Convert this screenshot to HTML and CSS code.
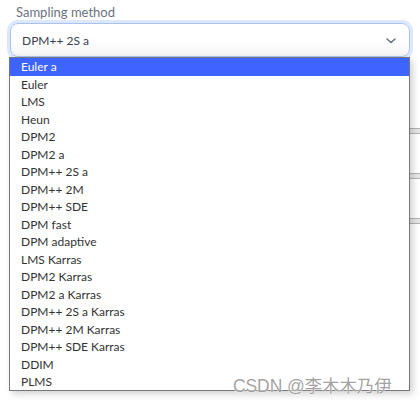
FILE: index.html
```html
<!DOCTYPE html>
<html lang="en">
<head>
<meta charset="utf-8">
<link rel="stylesheet" href="styles.css">
</head>
<body>
<div class="page">
  <div class="label">Sampling method</div>
  <div class="select">
    <span class="value">DPM++ 2S a</span>
    <svg class="chev" width="12" height="8" viewBox="0 0 12 8"><path d="M2 2 L6 5.5 L10 2" fill="none" stroke="#6b7280" stroke-width="1.6" stroke-linecap="round" stroke-linejoin="round"/></svg>
  </div>
  <div class="behind">
    <div class="field"><div class="num"></div></div>
    <div class="field"><div class="num"></div></div>
    <div class="field"><div class="num"></div></div>
  </div>
  <div class="menu">
    <ul class="options">
      <li class="active">Euler a</li>
      <li>Euler</li>
      <li>LMS</li>
      <li>Heun</li>
      <li>DPM2</li>
      <li>DPM2 a</li>
      <li>DPM++ 2S a</li>
      <li>DPM++ 2M</li>
      <li>DPM++ SDE</li>
      <li>DPM fast</li>
      <li>DPM adaptive</li>
      <li>LMS Karras</li>
      <li>DPM2 Karras</li>
      <li>DPM2 a Karras</li>
      <li>DPM++ 2S a Karras</li>
      <li>DPM++ 2M Karras</li>
      <li>DPM++ SDE Karras</li>
      <li>DDIM</li>
      <li>PLMS</li>
    </ul>
  </div>
  <div class="watermark">CSDN @李木木乃伊</div>
</div>
</body>
</html>
```

FILE: styles.css
```css
html, body {
  margin: 0;
  padding: 0;
  background: #ffffff;
}
.page {
  position: relative;
  width: 420px;
  height: 404px;
  overflow: hidden;
  padding-top: 4px;
  box-sizing: border-box;
  font-family: Lato, "Liberation Sans", sans-serif;
}
.label {
  font-size: 13px;
  line-height: 16px;
  color: #6b7280;
  padding-left: 16px;
  margin-bottom: 3px;
}
.select {
  margin: 0 10px;
  height: 34px;
  box-sizing: border-box;
  border: 1px solid #a9c2f6;
  border-radius: 8px;
  background: linear-gradient(#ffffff 55%, #f4f4f5 100%);
  box-shadow: 0 0 0 3px #dde7fd;
  display: flex;
  align-items: center;
  justify-content: space-between;
  padding: 0 12px 0 11px;
}
.value {
  font-size: 12px;
  color: #374151;
  padding-top: 1px;
}
.chev {
  display: block;
  margin-top: 1px;
}
.behind {
  display: flex;
  flex-direction: column;
  gap: 39px;
  padding-top: 71px;
}
.field {
  display: flex;
  justify-content: flex-end;
}
.num {
  width: 30px;
  height: 4px;
  border-top: 1px solid #b4b4b4;
  border-bottom: 1px solid #b4b4b4;
  background: #e6e6e6;
}
.menu {
  position: absolute;
  left: 9px;
  top: 57px;
  width: 401px;
  height: 334px;
  box-sizing: border-box;
  border: 1px solid #777777;
  background: #ffffff;
  padding-bottom: 2px;
  box-shadow: 3px 3px 7px rgba(0, 0, 0, 0.18);
}
.options {
  list-style: none;
  margin: 0;
  padding: 0;
  height: 100%;
  overflow: hidden;
}
.options li {
  height: 17.5px;
  line-height: 17.5px;
  font-size: 12px;
  color: #333333;
  padding-left: 11px;
}
.options li.active {
  background: #3e64ff;
  color: #ffffff;
}
.watermark {
  position: absolute;
  left: 233px;
  top: 376px;
  font-family: "Liberation Sans", "Noto Sans CJK SC", sans-serif;
  font-size: 17.5px;
  line-height: 20px;
  color: rgba(120, 120, 120, 0.7);
  text-shadow: 0 0 1px #ffffff, 0 0 2px #ffffff;
  letter-spacing: -0.1px;
}
```
